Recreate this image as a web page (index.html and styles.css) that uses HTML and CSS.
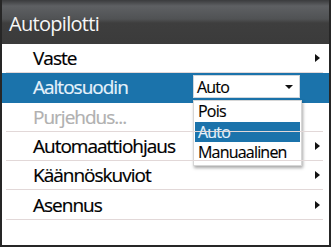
FILE: index.html
```html
<!DOCTYPE html>
<html>
<head>
<meta charset="utf-8">
<link rel="stylesheet" href="styles.css">
</head>
<body>
<div class="frame">
  <div class="header"><span class="title">Autopilotti</span></div>
  <div class="menu">
    <div class="row"><div class="row-in"><span class="label">Vaste</span><span class="chev"></span></div></div>
    <div class="row active"><div class="row-in"><span class="label">Aaltosuodin</span>
      <div class="select">
        <span class="sel-text">Auto</span><span class="sel-arrow"></span>
        <div class="options">
          <div class="opt">Pois</div>
          <div class="opt opt-on">Auto</div>
          <div class="opt">Manuaalinen</div>
        </div>
      </div>
    </div></div>
    <div class="row"><div class="row-in"><span class="label disabled">Purjehdus...</span></div></div>
    <div class="row"><div class="row-in"><span class="label">Automaattiohjaus</span><span class="chev"></span></div></div>
    <div class="row"><div class="row-in"><span class="label">Käännöskuviot</span><span class="chev"></span></div></div>
    <div class="row"><div class="row-in"><span class="label">Asennus</span><span class="chev"></span></div></div>
  </div>
</div>
</body>
</html>
```
FILE: styles.css
```css
html, body { margin: 0; padding: 0; background: #fff; }
body { font-family: "Open Sans", "Noto Sans", sans-serif; }
.frame {
  width: 331px; height: 247px; box-sizing: border-box;
  border: 2px solid #262626; border-top: 0;
  background: #fff; overflow: hidden;
}
.header {
  height: 44px; box-sizing: border-box;
  background: linear-gradient(#3a3b3d 0px, #5e6063 6px, #505254 19px, #3e3e3e 23px, #3b3b3b 44px);
  display: flex; align-items: center; padding-left: 7px;
}
.title { color: #f6f6f6; font-size: 20px; letter-spacing: -0.7px; position: relative; top: 1px; }
.menu { display: flex; flex-direction: column; }
.row { height: 29.3px; }
.row.active { background: #1b73ab; }
.row-in {
  height: 100%; box-sizing: border-box; margin: 0 6px 0 4px;
  border-bottom: 1px solid #e2d8d8;
  display: flex; align-items: center; position: relative;
}
.row.active .row-in { border-bottom-color: transparent; }
.label { padding-left: 27px; font-size: 19px; color: #000; letter-spacing: -1px; flex: 1; -webkit-text-stroke: 0.2px currentColor; }
.row.active .label { color: #e6f2fb; }
.label.disabled { color: #b0b0b0; }
.chev {
  width: 0; height: 0; margin-right: 3px;
  border-top: 4.5px solid transparent; border-bottom: 4.5px solid transparent;
  border-left: 5px solid #111;
}
.select {
  position: absolute; left: 187px; top: 2px;
  width: 107px; height: 23px; box-sizing: border-box;
  background: #fff; border: 1px solid #cfd6dc;
  display: flex; align-items: center; padding: 0 4px 0 3px;
}
.sel-text { flex: 1; font-size: 16px; color: #000; letter-spacing: -0.8px; -webkit-text-stroke: 0.15px currentColor; }
.sel-arrow {
  width: 0; height: 0; margin-right: 2px;
  border-left: 4px solid transparent; border-right: 4px solid transparent;
  border-top: 4px solid #111;
}
.options {
  position: absolute; left: -1px; top: 24px; width: 109px;
  background: #fff; border: 1px solid #d6d6d6;
  box-shadow: 1px 2px 3px rgba(0,0,0,0.35);
  padding: 0 1px 2px 1px; box-sizing: border-box;
}
.opt { height: 20.5px; line-height: 20.5px; font-size: 16px; color: #000; padding-left: 3px; letter-spacing: -0.8px; -webkit-text-stroke: 0.15px currentColor; }
.opt-on { background: #1b73ab; color: #e6f2fb; }
```
